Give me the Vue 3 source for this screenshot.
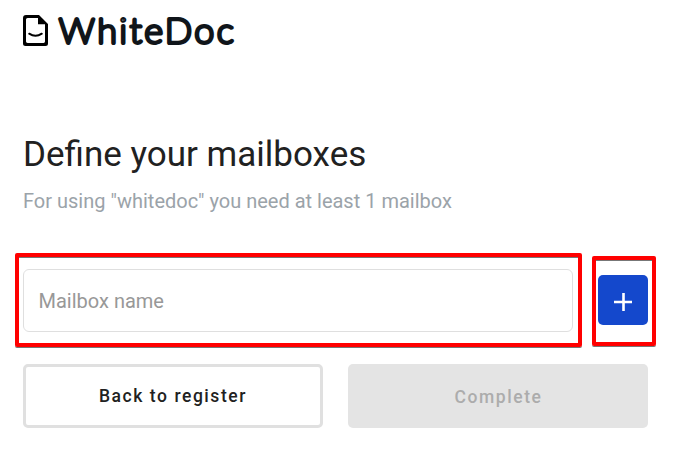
<script setup>
import { ref } from 'vue'

const mailbox = ref('')
</script>

<template>
  <main class="page">
    <header class="logo">
      <svg class="logo-icon" width="25" height="32" viewBox="0 0 25 32">
        <path fill="#000" fill-rule="evenodd" d="M3 0H16L25 9V28.5Q25 31 22.5 31H2.5Q0 31 0 28.5V3Q0 0 3 0ZM4.6 3Q3 3 3 4.6V26.6Q3 28 4.6 28H20.6Q22 28 22 26.6V9.2H15V3Z" />
        <path d="M6.2 18.7Q12.5 22.9 18.8 18.7" fill="none" stroke="#000" stroke-width="2" stroke-linecap="round" />
      </svg>
      <svg class="wordmark" width="180" height="40" viewBox="0 0 180 40">
        <text x="1" y="31.2" textLength="177.5" lengthAdjust="spacingAndGlyphs">WhiteDoc</text>
      </svg>
    </header>

    <h1>Define your mailboxes</h1>
    <p class="hint">For using "whitedoc" you need at least 1 mailbox</p>

    <form class="entry" @submit.prevent>
      <div class="field">
        <input v-model="mailbox" type="text" placeholder="Mailbox name" />
        <span class="mark mark-field"></span>
      </div>
      <div class="adder">
        <button type="button" class="add" aria-label="Add mailbox">
          <svg width="18" height="18" viewBox="0 0 18 18">
            <path d="M0 9H18M9.5 0V18" stroke="#fff" stroke-width="2.6" />
          </svg>
        </button>
        <span class="mark mark-add"></span>
      </div>
    </form>

    <div class="actions">
      <button type="button" class="btn back">Back to register</button>
      <button type="button" class="btn complete" disabled>Complete</button>
    </div>
  </main>
</template>

<style>
body {
  background: #fff;
}
</style>

<style scoped>
.page {
  box-sizing: border-box;
  height: 452px;
  padding: 15px 47px 0 23px;
  font-family: Roboto, sans-serif;
  overflow: hidden;
}
.logo {
  display: flex;
  height: 40px;
  gap: 10px;
}
.logo-icon {
  flex: none;
}
.wordmark {
  flex: none;
  margin-top: -3px;
  overflow: visible;
}
.wordmark text {
  font-family: Lato, sans-serif;
  font-size: 33.5px;
  font-weight: 100;
  letter-spacing: 2.8px;
  fill: #10151a;
  stroke: #10151a;
  stroke-width: 3.9px;
  stroke-linejoin: round;
}
h1 {
  margin: 79px 0 0;
  font-size: 35px;
  line-height: 42px;
  font-weight: 400;
  color: #212121;
  white-space: nowrap;
}
.hint {
  margin: 13px 0 0;
  font-size: 20px;
  line-height: 24px;
  color: #9ba3a9;
  white-space: nowrap;
}
.entry {
  display: flex;
  align-items: flex-start;
  gap: 25px;
  margin-top: 56px;
}
.field {
  position: relative;
  width: 550px;
  height: 63px;
}
.field input {
  box-sizing: border-box;
  display: block;
  width: 550px;
  height: 63px;
  padding: 0 14.5px;
  border: 1px solid #dfdfdf;
  border-radius: 6px;
  outline: none;
  font: 400 20px Roboto, sans-serif;
  color: #212121;
  background: #fff;
}
.field input::placeholder {
  color: #989898;
  opacity: 1;
}
.adder {
  position: relative;
  margin-top: 6px;
}
.add {
  display: flex;
  align-items: center;
  justify-content: center;
  width: 50px;
  height: 50px;
  padding: 4px 0 0;
  border: 0;
  border-radius: 5px;
  background: #1448cc;
}
.mark {
  position: absolute;
  box-sizing: border-box;
  border: 4px solid #f00;
  border-radius: 2px;
  box-shadow: 0 1px 0 #777, inset 0 1px 0 #777;
  pointer-events: none;
}
.mark-field {
  left: -8px;
  top: -16px;
  width: 567px;
  height: 94px;
}
.mark-add {
  left: -6px;
  top: -19px;
  width: 64px;
  height: 90px;
}
.actions {
  display: flex;
  gap: 25px;
  margin-top: 32px;
}
.btn {
  box-sizing: border-box;
  width: 300px;
  height: 64px;
  padding: 0;
  border-radius: 5px;
  font: 500 17.5px Roboto, sans-serif;
  letter-spacing: 1.55px;
}
.back {
  padding-bottom: 1px;
  border: 3px solid #e0e0e0;
  background: #fff;
  color: #212121;
}
.complete {
  padding: 1px 0 0 1px;
  border: 0;
  background: #e4e4e4;
  color: #acacac;
}
</style>
